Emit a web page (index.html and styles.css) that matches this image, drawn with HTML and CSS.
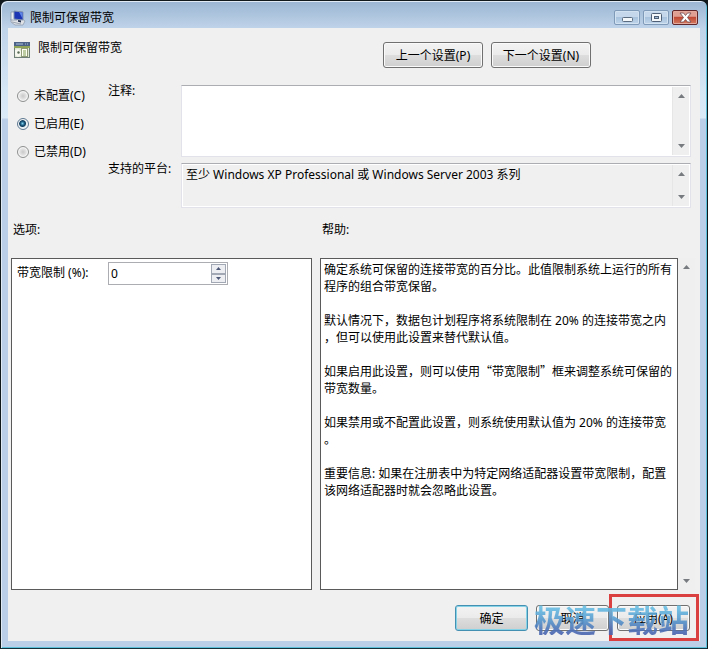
FILE: index.html
```html
<!DOCTYPE html>
<html lang="zh-CN">
<head>
<meta charset="utf-8">
<title>限制可保留带宽</title>
<link rel="stylesheet" href="styles.css">
</head>
<body>
<div class="window">
  <header class="titlebar">
    <svg class="title-icon" viewBox="0 0 16 16" aria-hidden="true">
      <path d="M1 9l8-2 6 4-2 4-8 0-4-3z" fill="#dfe3e8" stroke="#8a96a8" stroke-width=".7"/>
      <path d="M1 2h6v8H1z" fill="#e9edf2" stroke="#8794ab" stroke-width=".8"/>
      <path d="M4 1l9 1v8l-9-1z" fill="#1c35b5" stroke="#7f90ad" stroke-width="1"/>
      <path d="M9 2l3.500 .4v6z" fill="#5f86e6"/>
      <path d="M8 10l3 .4v2l-3-.6z" fill="#25324f"/>
      <path d="M2 12l9 2" stroke="#9aa4b2" stroke-width="1"/>
    </svg>
    <h1 class="title">限制可保留带宽</h1>
    <div class="controls">
      <button class="control" type="button" aria-label="最小化">
        <svg viewBox="0 0 24 13" aria-hidden="true"><rect x="7.500" y="6.500" width="10" height="4" rx="1" fill="#f4f7fa" stroke="#5b6b80"/></svg>
      </button>
      <button class="control" type="button" aria-label="最大化">
        <svg viewBox="0 0 24 13" aria-hidden="true"><rect x="7.500" y="2.500" width="10" height="8" rx="1" fill="#f4f7fa" stroke="#4f5f75"/><rect x="10.500" y="5.500" width="4" height="2" fill="#9fb8d4" stroke="#4f5f75"/></svg>
      </button>
      <button class="control control-close" type="button" aria-label="关闭">
        <svg viewBox="0 0 24 13" aria-hidden="true"><path d="M7 2h3.500l2 2.500 2-2.500H18l-3.500 4.500L18 11h-3.500l-2-2.500-2 2.500H7l3.500-4.500z" fill="#fff" stroke="#6d4a50" stroke-width=".8"/></svg>
      </button>
    </div>
  </header>

  <main class="client">
    <section class="heading">
      <svg class="policy-icon" viewBox="0 0 16 16" aria-hidden="true">
        <rect x=".5" y=".5" width="15" height="15" fill="#dfe6d2" stroke="#6f7f78"/>
        <rect x="0" y="0" width="16" height="4" fill="#4d6287"/>
        <path d="M2 2h7M11 2h1M13 2h1" stroke="#a9c0dd"/>
        <rect x="0" y="4" width="16" height="2" fill="#8fa458"/>
        <rect x="7.500" y="6.500" width="6" height="8" fill="#fffff4" stroke="#8f9b76"/>
        <path d="M9 9h3M9 11h3M9 13h3" stroke="#7d9a50"/>
        <path d="M1 8l3-1 3 2v4l-3 2-3-2z" fill="#f7f8ef"/>
        <circle cx="4.500" cy="10.500" r="1.200" fill="#596b56"/>
      </svg>
      <h2 class="policy-name">限制可保留带宽</h2>
      <button class="button nav-button" type="button">上一个设置(P)</button>
      <button class="button nav-button" type="button">下一个设置(N)</button>
    </section>

    <section class="state">
      <fieldset class="radios">
        <label class="radio"><input type="radio" name="state">未配置(C)</label>
        <label class="radio"><input type="radio" name="state" checked>已启用(E)</label>
        <label class="radio"><input type="radio" name="state">已禁用(D)</label>
      </fieldset>
      <div class="fields">
        <label class="field-label" for="comment">注释:</label>
        <div class="textbox textbox-comment">
          <textarea id="comment"></textarea>
          <div class="scrollbar">
            <svg viewBox="0 0 9 5" aria-hidden="true"><path d="M0 5l4.500-5L9 5z"/></svg>
            <svg viewBox="0 0 9 5" aria-hidden="true"><path d="M0 0h9L4.500 5z"/></svg>
          </div>
        </div>
        <label class="field-label" for="platform">支持的平台:</label>
        <div class="textbox textbox-platform">
          <textarea id="platform" readonly>至少 Windows XP Professional 或 Windows Server 2003 系列</textarea>
          <div class="scrollbar">
            <svg viewBox="0 0 9 5" aria-hidden="true"><path d="M0 5l4.500-5L9 5z"/></svg>
            <svg viewBox="0 0 9 5" aria-hidden="true"><path d="M0 0h9L4.500 5z"/></svg>
          </div>
        </div>
      </div>
    </section>

    <section class="panels">
      <h3 class="panel-title">选项:</h3>
      <h3 class="panel-title">帮助:</h3>
      <div class="panel options">
        <label for="limit">带宽限制 (%):</label>
        <div class="spinner">
          <input id="limit" type="text" inputmode="numeric" value="0">
          <div class="spin-buttons">
            <button type="button" aria-label="增加"><svg viewBox="0 0 7 4" aria-hidden="true"><path d="M0 4l3.500-4L7 4z"/></svg></button>
            <button type="button" aria-label="减少"><svg viewBox="0 0 7 4" aria-hidden="true"><path d="M0 0h7L3.500 4z"/></svg></button>
          </div>
        </div>
      </div>
      <div class="help">
        <div class="panel help-text">
          <p>确定系统可保留的连接带宽的百分比。此值限制系统上运行的所有<br>程序的组合带宽保留。</p>
          <p>默认情况下，数据包计划程序将系统限制在 20% 的连接带宽之内<br>，但可以使用此设置来替代默认值。</p>
          <p>如果启用此设置，则可以使用<span class="wide">“</span>带宽限制<span class="wide">”</span>框来调整系统可保留的<br>带宽数量。</p>
          <p>如果禁用或不配置此设置，则系统使用默认值为 20% 的连接带宽<br>。</p>
          <p>重要信息: 如果在注册表中为特定网络适配器设置带宽限制，配置<br>该网络适配器时就会忽略此设置。</p>
        </div>
        <div class="scrollbar">
          <svg viewBox="0 0 9 5" aria-hidden="true"><path d="M0 5l4.500-5L9 5z"/></svg>
          <svg viewBox="0 0 9 5" aria-hidden="true"><path d="M0 0h9L4.500 5z"/></svg>
        </div>
      </div>
    </section>

    <footer class="actions">
      <button class="button button-default" type="button">确定</button>
      <button class="button" type="button">取消</button>
      <div class="apply">
        <button class="button" type="button">应用(A)</button>
        <div class="highlight"></div>
      </div>
      <div class="watermark">极速下载站</div>
    </footer>
  </main>
</div>
</body>
</html>
```
FILE: styles.css
```css
* {
  box-sizing: border-box;
}

body {
  margin: 0;
  background: #10181c;
  color: #000;
  font: 12px/17px "Noto Sans", "Noto Sans CJK SC", sans-serif;
}

h1, h2, h3, p {
  margin: 0;
  font-size: 12px;
  font-weight: 400;
}

button, input, textarea {
  font: inherit;
  color: inherit;
}

.window {
  display: flex;
  flex-direction: column;
  min-height: 100vh;
  padding: 0 7px 7px;
  border: 1px solid #10181c;
  border-bottom-color: #14303a;
  border-radius: 7px 7px 0 0;
  background: linear-gradient(#9ab5d2 0, #bfd3e9 27px, #d5e6f5 90px, #dbeaf7 117px, #bccfe9 118px, #bccfe9 100%);
  box-shadow: inset 1px 1px #dfeaf5, inset -1px -1px #5cc0da;
}

.titlebar {
  display: flex;
  align-items: center;
  height: 27px;
  padding: 6px 2px 0;
}

.title-icon {
  width: 16px;
  height: 16px;
}

.title {
  flex: 1;
  margin-left: 4px;
}

.controls {
  display: flex;
  gap: 3px;
}

.control {
  width: 26px;
  height: 15px;
  padding: 0;
  border: 1px solid #7f99b8;
  border-radius: 2px;
  background: linear-gradient(#c5d8eb 0 45%, #a9c3de 50%, #bfd5ea);
  box-shadow: inset 0 0 0 1px #d3e2f1;
}

.control svg {
  display: block;
  width: 100%;
  height: 13px;
}

.control-close {
  border-color: #61262a;
  background: linear-gradient(#dfa093 0 40%, #c04a35 50%, #d47a5f);
  box-shadow: inset 0 0 0 1px #e3a99d;
}

.client {
  display: flex;
  flex: 1;
  flex-direction: column;
  background: #f0f0f0;
}

.heading {
  display: flex;
  align-items: flex-start;
  gap: 8px;
  height: 57px;
  padding: 14px 109px 0 6px;
}

.policy-icon {
  width: 16px;
  height: 16px;
}

.policy-name {
  flex: 1;
  margin-top: -3px;
}

.button {
  width: 73px;
  height: 26px;
  padding: 0;
  border: 1px solid #707070;
  border-radius: 3px;
  background: linear-gradient(#f3f3f3 0, #ebebeb 48%, #dddddd 52%, #cfcfcf);
  box-shadow: inset 0 0 0 1px #fafafa;
}

.nav-button {
  width: 100px;
}

.button-default {
  border-color: #4390b3;
  box-shadow: inset 0 0 0 1px #86d3e8;
}

.state {
  display: grid;
  grid-template-columns: 91px 1fr;
  padding: 0 9px;
}

.radios {
  display: flex;
  flex-direction: column;
  gap: 11px;
  margin: 0;
  padding: 2px 0 0;
  border: 0;
}

.radio {
  display: flex;
  align-items: center;
  gap: 5px;
}

.radio input {
  appearance: none;
  width: 12px;
  height: 12px;
  margin: 0;
  border: 1px solid #8e8f8f;
  border-radius: 50%;
  background: radial-gradient(#c8c8c8, #efefef 65%);
  box-shadow: inset 0 0 0 1px #f6f6f6;
}

.radio input:checked {
  border-color: #5c7890;
  background: radial-gradient(circle at 45% 45%, #7fd0ee 0, #1b5a80 2px, #123f5e 3px, #e4edf3 4px);
}

.fields {
  display: grid;
  grid-template-columns: 73px 1fr;
  row-gap: 6px;
}

.field-label {
  margin-top: -3px;
}

.textbox {
  display: flex;
  padding: 1px;
  border: 1px solid #e2e3ea;
  border-top-color: #abadb3;
  background: #fff;
}

.textbox-comment {
  height: 72px;
}

.textbox-platform {
  height: 45px;
}

.textbox textarea {
  flex: 1;
  padding: 1px 3px;
  border: 0;
  outline: 0;
  resize: none;
  overflow: hidden;
  background: #fff;
}

.textbox textarea:read-only {
  background: #f0f0f0;
}

.scrollbar {
  display: flex;
  flex-direction: column;
  align-items: center;
  justify-content: space-between;
  width: 17px;
  padding: 7px 0;
  background: #efefef;
}

.textbox .scrollbar {
  border-left: 1px solid #e6e6e6;
}

.scrollbar svg {
  width: 7px;
  height: 4px;
  fill: #777b80;
}

.panels {
  display: grid;
  flex: 1;
  grid-template-columns: 301fr 375fr;
  grid-template-rows: 37px 1fr;
  column-gap: 8px;
  padding: 13px 5px 0 3px;
}

.panel-title {
  padding-left: 2px;
}

.panel {
  border: 1px solid #5a5a5a;
  background: #fff;
}

.options {
  display: grid;
  grid-template-columns: 91px 120px;
  align-items: start;
  align-content: start;
  padding: 3px 5px;
}

.options label {
  margin-top: 2px;
}

.spinner {
  display: flex;
  height: 23px;
  padding: 1px;
  border: 1px solid #abadb3;
}

.spinner input {
  flex: 1;
  min-width: 0;
  padding: 0 1px;
  border: 0;
  outline: 0;
}

.spin-buttons {
  display: flex;
  flex-direction: column;
  width: 15px;
}

.spin-buttons button {
  display: flex;
  flex: 1;
  align-items: center;
  justify-content: center;
  padding: 0;
  border: 1px solid #a3a8b5;
  background: #eceef2;
}

.spin-buttons svg {
  width: 5px;
  height: 3px;
  fill: #4c5876;
}

.help {
  display: flex;
}

.help-text {
  flex: 1;
  padding: 2px 3px;
  white-space: nowrap;
}

.help-text p + p {
  margin-top: 17px;
}

.wide {
  font-family: "Noto Sans CJK SC", sans-serif;
  line-height: 1;
}

.actions {
  position: relative;
  display: flex;
  justify-content: flex-end;
  gap: 8px;
  height: 51px;
  padding: 15px 10px 0 0;
}

.apply {
  position: relative;
}

.highlight {
  position: absolute;
  inset: -11px -9px auto -8px;
  height: 47px;
  border: 3px solid #d9403f;
}

.watermark {
  position: absolute;
  top: 12px;
  right: 11px;
  font: 700 31px/33px "Noto Sans CJK SC", sans-serif;
  color: transparent;
  background: linear-gradient(#6cc5e8 10%, #5a9fd2 50%, #4a66b0 95%);
  background-clip: text;
  opacity: .9;
  pointer-events: none;
}
```
